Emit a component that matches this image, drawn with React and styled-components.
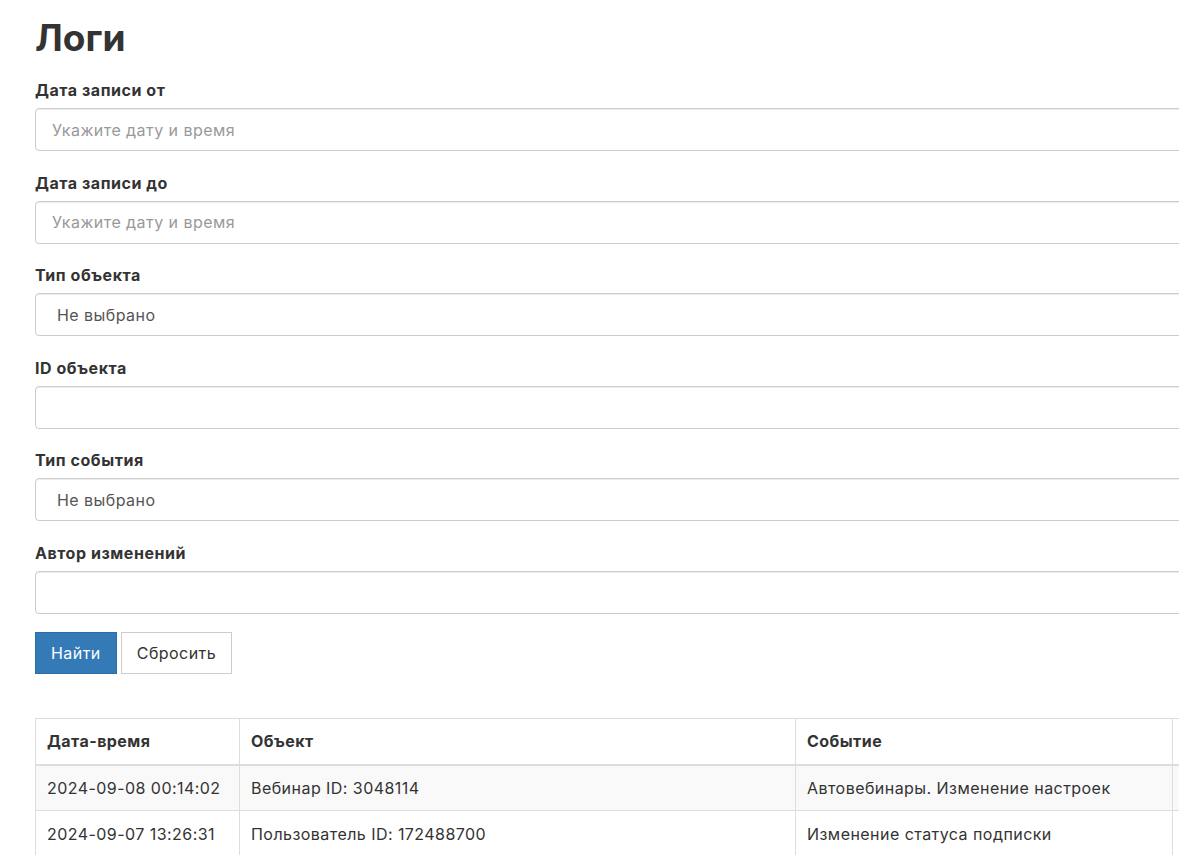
import styled, { createGlobalStyle } from "styled-components";

const Global = createGlobalStyle`
  html, body {
    margin: 0;
    padding: 0;
    overflow-x: hidden;
    background: #fff;
  }
  body {
    font-family: Inter, "Noto Sans", "Liberation Sans", sans-serif;
    color: #333;
    letter-spacing: 0.45px;
  }
`;

const Page = styled.div`
  width: 1320px;
  padding: 14px 0 0 35px;
  box-sizing: border-box;
`;

const Title = styled.h1`
  margin: 0 0 16px;
  font-size: 37px;
  font-weight: 700;
  line-height: 48px;
  color: #333;
  letter-spacing: 0;
`;

const Group = styled.div`
  display: flex;
  flex-direction: column;
  margin-bottom: 19.6px;
`;

const Label = styled.label`
  font-size: 16px;
  font-weight: 700;
  line-height: 24px;
  margin-bottom: 6px;
  color: #333;
  letter-spacing: 0.55px;
`;

const Field = styled.div`
  height: 43px;
  box-sizing: border-box;
  border: 1px solid #ccc;
  border-radius: 4px;
  box-shadow: inset 0 1px 1px rgba(0, 0, 0, 0.075);
  display: flex;
  align-items: center;
  padding-left: ${(p) => (p.select ? "21px" : "16px")};
  font-size: 16px;
  color: ${(p) => (p.placeholder ? "#999" : "#555")};
`;

const Buttons = styled.div`
  display: flex;
  gap: 4px;
  margin-top: -1.5px;
  margin-bottom: 44px;
`;

const Button = styled.button`
  height: 42px;
  box-sizing: border-box;
  padding: 0 15px;
  font-family: inherit;
  font-size: 16px;
  letter-spacing: inherit;
  border-radius: 0;
  border: 1px solid ${(p) => (p.primary ? "#2e6da4" : "#ccc")};
  background: ${(p) => (p.primary ? "#337ab7" : "#fff")};
  color: ${(p) => (p.primary ? "#fff" : "#333")};
`;

const Table = styled.table`
  border-collapse: collapse;
  width: 1260px;
  font-size: 16px;
`;

const Th = styled.th`
  text-align: left;
  font-weight: 700;
  padding: 0 11px;
  height: 46px;
  border: 1px solid #ddd;
  border-bottom: 2px solid #ddd;
  width: ${(p) => p.w};
  box-sizing: border-box;
`;

const Tr = styled.tr`
  background: ${(p) => (p.striped ? "#f9f9f9" : "#fff")};
`;

const Td = styled.td`
  padding: 0 11px;
  height: 46px;
  border: 1px solid #ddd;
  color: #333;
  box-sizing: border-box;
`;

const rows = [
  ["2024-09-08 00:14:02", "Вебинар ID: 3048114", "Автовебинары. Изменение настроек"],
  ["2024-09-07 13:26:31", "Пользователь ID: 172488700", "Изменение статуса подписки"],
];

export default function App() {
  return (
    <Page>
      <Global />
      <Title>Логи</Title>
      <Group>
        <Label>Дата записи от</Label>
        <Field placeholder>Укажите дату и время</Field>
      </Group>
      <Group>
        <Label>Дата записи до</Label>
        <Field placeholder>Укажите дату и время</Field>
      </Group>
      <Group>
        <Label>Тип объекта</Label>
        <Field select>Не выбрано</Field>
      </Group>
      <Group>
        <Label>ID объекта</Label>
        <Field />
      </Group>
      <Group>
        <Label>Тип события</Label>
        <Field select>Не выбрано</Field>
      </Group>
      <Group>
        <Label>Автор изменений</Label>
        <Field />
      </Group>
      <Buttons>
        <Button primary>Найти</Button>
        <Button>Сбросить</Button>
      </Buttons>
      <Table>
        <thead>
          <tr>
            <Th w="204px">Дата-время</Th>
            <Th w="556px">Объект</Th>
            <Th w="377px">Событие</Th>
            <Th />
          </tr>
        </thead>
        <tbody>
          {rows.map((r, i) => (
            <Tr key={i} striped={i % 2 === 0}>
              <Td>{r[0]}</Td>
              <Td>{r[1]}</Td>
              <Td>{r[2]}</Td>
              <Td />
            </Tr>
          ))}
        </tbody>
      </Table>
    </Page>
  );
}
